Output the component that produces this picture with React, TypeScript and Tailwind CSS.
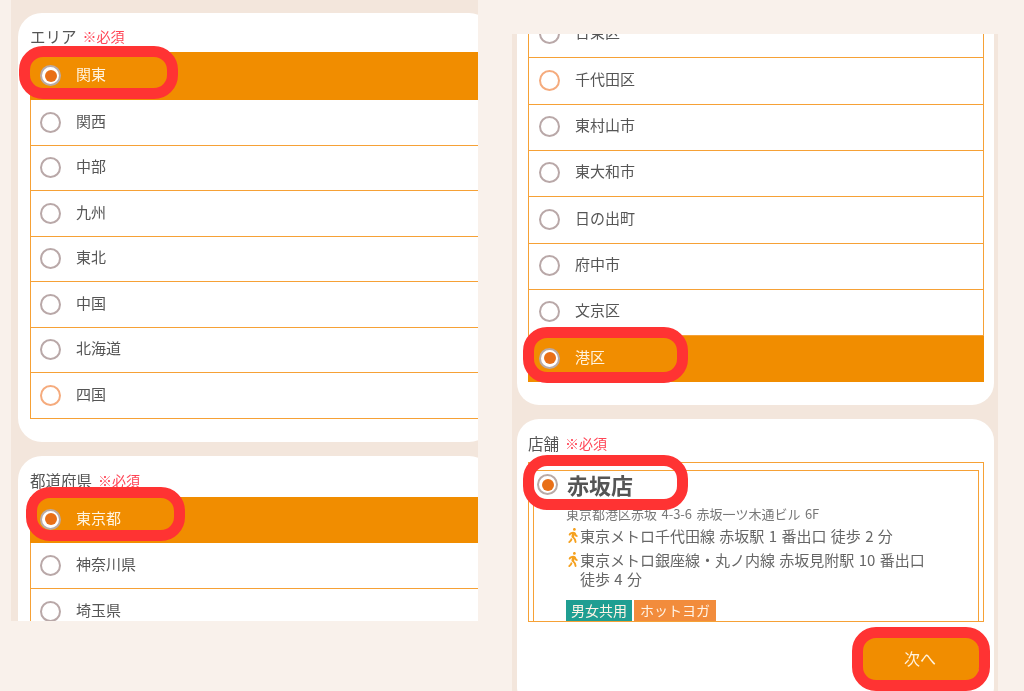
import { FaWalking } from "react-icons/fa";

const font = { fontFamily: '"Noto Sans CJK JP", "Noto Sans", sans-serif' };

function Radio({ state }: { state: "off" | "hot" | "on" }) {
  if (state === "on") {
    return (
      <span className="flex h-[21px] w-[21px] shrink-0 items-center justify-center rounded-full border-2 border-[#b9aaa6] bg-white">
        <span className="h-[12px] w-[12px] rounded-full bg-[#e96f17]" />
      </span>
    );
  }
  return (
    <span
      className={
        state === "hot"
          ? "h-[21px] w-[21px] shrink-0 rounded-full border-2 border-[#f5ab7d] bg-white"
          : "h-[21px] w-[21px] shrink-0 rounded-full border-2 border-[#b9a8a8] bg-white"
      }
    />
  );
}

function Row({ label, state = "off", h, pad, clipTop }: { label: string; state?: "off" | "hot" | "on"; h: string; pad: string; clipTop?: boolean }) {
  const on = state === "on";
  return (
    <div
      className={`${h} ${pad} flex items-center gap-[15px] border-b border-x text-[15px] ${clipTop ? "-mt-[23px]" : ""} ${
        on ? "border-[#f18d00] bg-[#f18d00] text-[#fff3df]" : "border-[#f6a136] bg-white text-[#555]"
      }`}
    >
      <Radio state={state} />
      <span className="pb-[2px]">{label}</span>
    </div>
  );
}

function Label({ name, leading, className = "" }: { name: string; leading: string; className?: string }) {
  return (
    <div className={`flex items-center gap-[6px] text-[15.5px] text-[#555] ${leading} ${className}`}>
      <span>{name}</span>
      <span className="text-[14px] text-[#ff4455]">※必須</span>
    </div>
  );
}

function Highlight({ className }: { className: string }) {
  return <div className={`pointer-events-none absolute rounded-[24px] border-[11px] border-[#ff3333] ${className}`} />;
}

function Walk({ text }: { text: string }) {
  return (
    <div className="flex items-start text-[15px] leading-[19px] text-[#666] [word-spacing:1px]">
      <FaWalking className="mt-[2px] h-[15px] w-[14px] shrink-0 text-[#f5a11f]" />
      <span>{text}</span>
    </div>
  );
}

const leftPad = "pl-[9px] pb-[1px]";
const rightPad = "pl-[10px] pb-[2px]";

export default function App() {
  return (
    <div className="relative flex h-[691px] w-[1024px] items-start overflow-hidden bg-[#f9f1eb] blur-[0.4px]" style={font}>
      {/* left phone capture */}
      <div className="ml-[11px] h-[621px] w-[467px] shrink-0 overflow-hidden bg-[#f3e6dc] pl-[7px] pt-[13px]">
        <div className="h-[429px] w-[475px] rounded-[24px] bg-white pl-[12px] pt-[10px]">
          <Label name="エリア" leading="leading-[26px]" className="mb-[3px]" />
          <div className="border-t border-[#f18d00]">
            <Row label="関東" state="on" h="h-[47px]" pad={leftPad} />
            <Row label="関西" h="h-[46px]" pad={leftPad} />
            <Row label="中部" h="h-[45px]" pad={leftPad} />
            <Row label="九州" h="h-[46px]" pad={leftPad} />
            <Row label="東北" h="h-[45px]" pad={leftPad} />
            <Row label="中国" h="h-[46px]" pad={leftPad} />
            <Row label="北海道" h="h-[45px]" pad={leftPad} />
            <Row label="四国" state="hot" h="h-[46px]" pad={leftPad} />
          </div>
        </div>
        <div className="mt-[14px] h-[240px] w-[475px] rounded-[24px] bg-white pl-[12px] pt-[10px]">
          <Label name="都道府県" leading="leading-[28px]" className="mb-[3px]" />
          <div>
            <Row label="東京都" state="on" h="h-[46px]" pad={leftPad} />
            <Row label="神奈川県" h="h-[46px]" pad={leftPad} />
            <Row label="埼玉県" h="h-[46px]" pad={leftPad} />
          </div>
        </div>
      </div>

      {/* right phone capture */}
      <div className="ml-[34px] mt-[34px] h-[657px] w-[486px] shrink-0 overflow-hidden bg-[#f3e6dc] pl-[5px] pr-[4px]">
        <div className="h-[371px] overflow-hidden rounded-b-[22px] bg-white pl-[11px] pr-[10px]">
          <Row label="台東区" h="h-[47px]" pad={rightPad} clipTop />
          <Row label="千代田区" state="hot" h="h-[47px]" pad={rightPad} />
          <Row label="東村山市" h="h-[46px]" pad={rightPad} />
          <Row label="東大和市" h="h-[46px]" pad={rightPad} />
          <Row label="日の出町" h="h-[47px]" pad={rightPad} />
          <Row label="府中市" h="h-[46px]" pad={rightPad} />
          <Row label="文京区" h="h-[46px]" pad={rightPad} />
          <Row label="港区" state="on" h="h-[46px]" pad="pl-[10px] pb-[1px]" />
        </div>
        <div className="mt-[14px] h-[290px] rounded-[22px] bg-white pl-[11px] pr-[10px] pt-[12px]">
          <Label name="店舗" leading="leading-[24px]" />
          <div className="mt-[7px] h-[160px] overflow-hidden border border-[#f6a136] px-[4px] pt-[7px]">
            <div className="h-[170px] border-x border-t border-[#f6a136] pl-[3px]">
              <div className="flex h-[27px] items-center gap-[9px]">
                <Radio state="on" />
                <span className="text-[22px] font-bold text-[#555]">赤坂店</span>
              </div>
              <div className="ml-[29px]">
                <div className="mt-[8px] text-[13px] leading-[16px] text-[#777] [word-spacing:1.5px]">東京都港区赤坂 4-3-6 赤坂一ツ木通ビル 6F</div>
                <div className="mt-[4px] flex w-[360px] flex-col gap-[5px]">
                  <Walk text="東京メトロ千代田線 赤坂駅 1 番出口 徒歩 2 分" />
                  <Walk text="東京メトロ銀座線・丸ノ内線 赤坂見附駅 10 番出口 徒歩 4 分" />
                </div>
                <div className="mt-[12px] flex gap-[2px] text-[14px] leading-[21px] text-[#fff3e6]">
                  <span className="bg-[#1f9e92] px-[5px]">男女共用</span>
                  <span className="bg-[#f28c3c] px-[6px]">ホットヨガ</span>
                </div>
              </div>
            </div>
          </div>
          <div className="mt-[15px] flex justify-end pr-[5px]">
            <div className="flex h-[44px] w-[118px] items-center justify-center rounded-[12px] bg-[#f18d00] pb-[2px] text-[16px] text-[#fff3df]">
              次へ
            </div>
          </div>
        </div>
      </div>

      <Highlight className="left-[19px] top-[46px] h-[53px] w-[159px]" />
      <Highlight className="left-[26px] top-[487px] h-[54px] w-[159px]" />
      <Highlight className="left-[523px] top-[327px] h-[56px] w-[165px]" />
      <Highlight className="left-[523px] top-[455px] h-[55px] w-[165px]" />
      <Highlight className="left-[852px] top-[627px] h-[64px] w-[138px]" />
    </div>
  );
}
